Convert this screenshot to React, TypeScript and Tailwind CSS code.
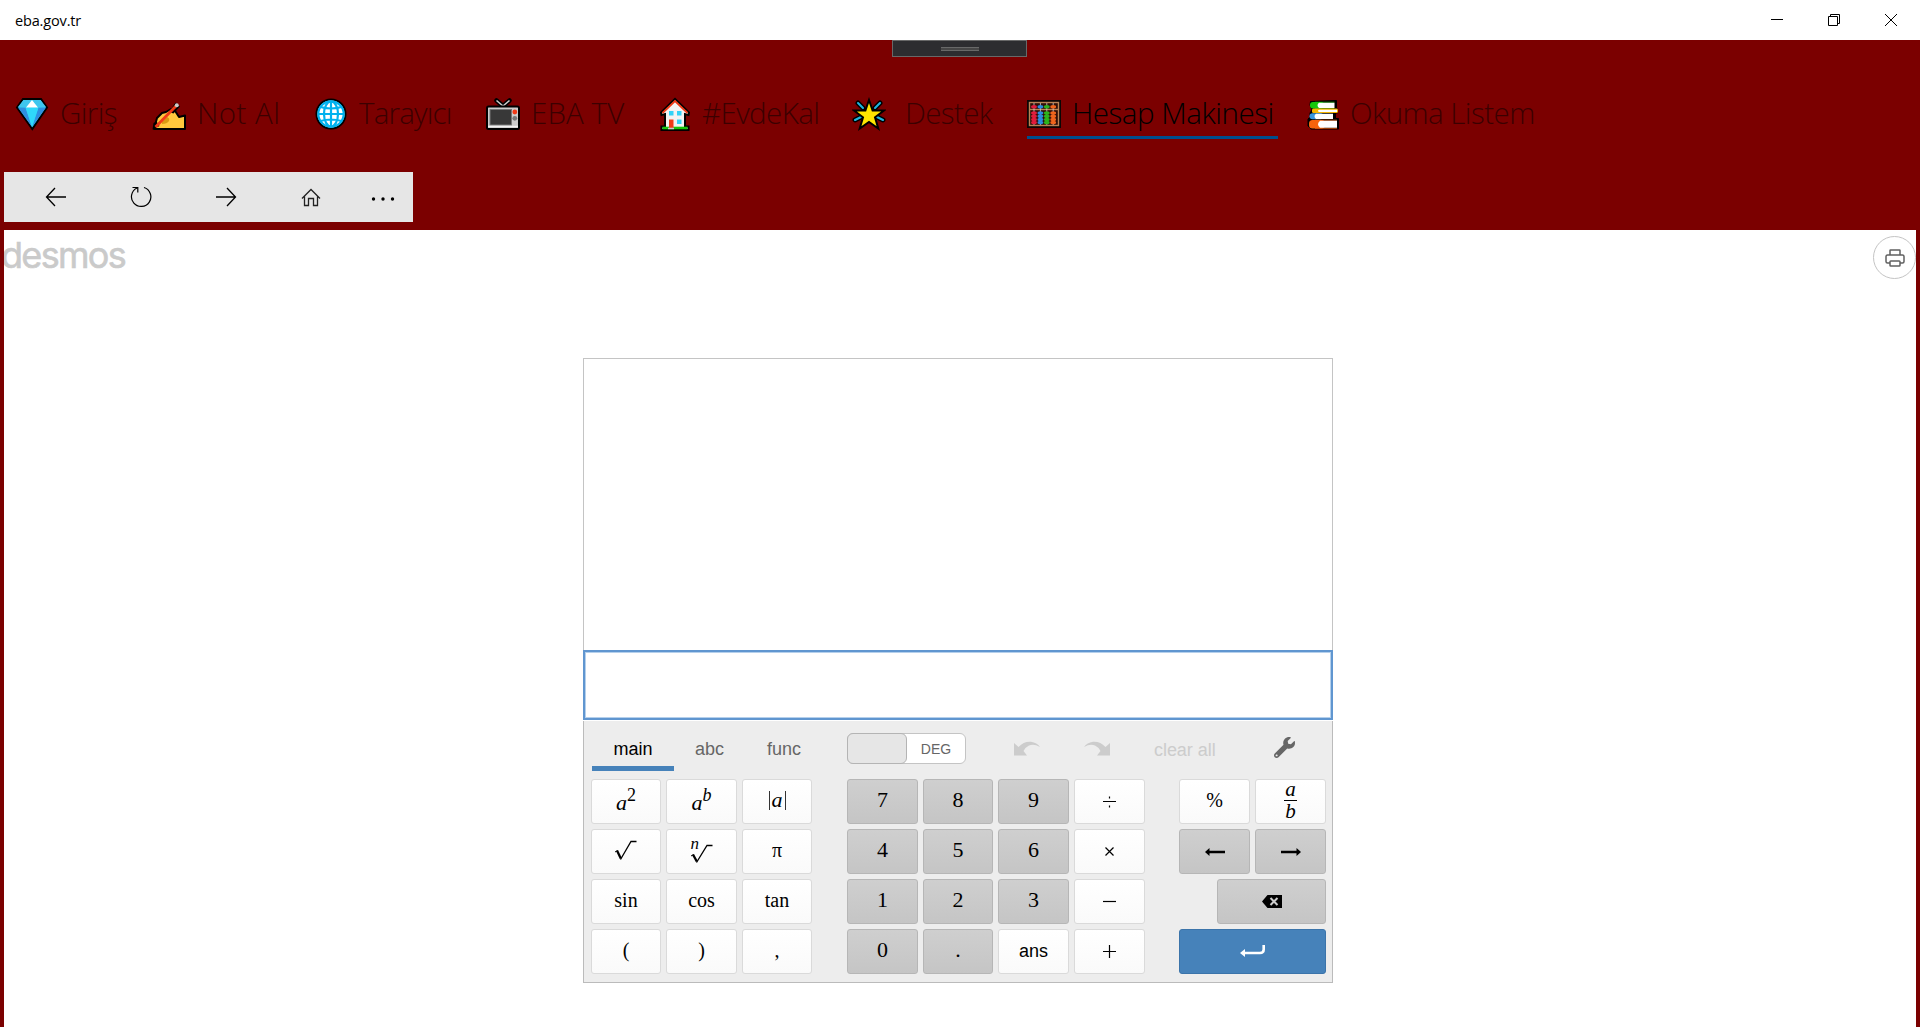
import type { ReactNode } from "react";

const Gem = () => (
  <svg width="34" height="34" viewBox="0 0 34 34">
    <path d="M8 2h18l6 8.5L17.300 32 2 10.500z" fill="#2bc8ee" stroke="#000" strokeWidth="2" />
    <path d="M3 10.500h7.500L17 30z" fill="#2f8fe0" />
    <path d="M31 10.500h-7.500L17 30z" fill="#2f8fe0" />
    <path d="M3 10l5.500-7H17l-6.500 7.500z" fill="#3fc6ee" />
    <path d="M31 10l-5.500-7H17l6.500 7.500z" fill="#3fc6ee" />
    <path d="M10.500 10.500h13L17 30z" fill="#2fd8fa" />
    <path d="M17 3l6 7.500H11z" fill="#fff" />
  </svg>
);
const Writing = () => (
  <svg width="36" height="34" viewBox="0 0 36 34">
    <path d="M3 32l3-11 5-5 4-1 5-3 3.500 1 4.500 7 6-1.500V32z" fill="#ffc83d" stroke="#000" strokeWidth="2" strokeLinejoin="round" />
    <path d="M11 25l5-5q3 1 2 4-2 3-7 3z" fill="#d99a12" />
    <path d="M18 15l6.500-9.500 4.500 4-6.500 7z" fill="#000" />
    <path d="M1.500 32.500l1-6.500 3-1.500 3 4.500z" fill="#000" />
    <path d="M4.500 30L25.500 8.500" stroke="#f03a17" strokeWidth="2.800" />
    <circle cx="25.800" cy="8.300" r="2" fill="#ccc" />
  </svg>
);
const Globe = () => (
  <svg width="34" height="34" viewBox="0 0 34 34" fill="none">
    <circle cx="17" cy="17" r="14.500" fill="#fff" stroke="#000" strokeWidth="2" />
    <g stroke="#00b1ee" strokeWidth="2.200">
      <circle cx="17" cy="17" r="12.700" />
      <ellipse cx="17" cy="17" rx="7" ry="12.500" />
      <path d="M17 4v26M4 17h26M6.500 10q10.500 3 21 0M6.500 24q10.500-3 21 0" />
    </g>
  </svg>
);
const Tv = () => (
  <svg width="36" height="34" viewBox="0 0 36 34">
    <path d="M11.500 3.500L18 9l6.500-5.500" stroke="#000" strokeWidth="4.500" fill="none" strokeLinecap="round" />
    <path d="M11.500 3.500L18 9l6.500-5.500" stroke="#ccc" strokeWidth="1.600" fill="none" />
    <rect x="2" y="9.500" width="32" height="22.500" rx="1.500" fill="#ccc" stroke="#000" strokeWidth="2" />
    <rect x="5" y="12.500" width="21.500" height="15.500" fill="#383838" stroke="#767676" />
    <circle cx="29.800" cy="15" r="2.400" fill="#f03a17" />
    <circle cx="29.800" cy="21.300" r="2.400" fill="#767676" />
    <path d="M3 29.500h30" stroke="#f2f2f2" strokeWidth="1.500" />
  </svg>
);
const House = () => (
  <svg width="32" height="34" viewBox="0 0 32 34">
    <path d="M2.500 33v-3.500H6V17l-3.500 1-.500-2.500L16 2l14 13.500-.500 2.500L26 17v12.500h3.500V33z" fill="#f2f2f2" stroke="#000" strokeWidth="2" />
    <path d="M3.500 16L16 4l12.500 12" fill="none" stroke="#f03a17" strokeWidth="1.800" />
    <path d="M3.500 31h25" stroke="#16c60c" strokeWidth="2.600" />
    <path d="M10 22.500h4.500V32H10z" fill="#f03a17" />
    <path d="M10 14h4.500v4.500H10zM18 14h4.500v4.500H18zM18 22.500h4.500V27H18z" fill="#31d2f7" />
    <path d="M9 31.500h6" stroke="#ccc" strokeWidth="1.500" />
  </svg>
);
const Star = () => (
  <svg width="34" height="34" viewBox="0 0 34 34">
    <g strokeLinecap="round">
      <path d="M6 6l5 5M28 6l-5 5M3 23l6-3M31 23l-6-3" stroke="#000" strokeWidth="5" />
      <path d="M6 6l5 5M28 6l-5 5M3 23l6-3M31 23l-6-3" stroke="#1fb6e0" strokeWidth="2" />
    </g>
    <path d="M17 3l3.600 10.500H32l-9 6.800L26.300 31.500 17 25l-9.300 6.500L11 20.300l-9-6.800h11.400z" fill="#ffe500" stroke="#000" strokeWidth="2" />
  </svg>
);
const abacusRods = [
  ["#e11c3c", 7],
  ["#2a8be0", 13.4],
  ["#2cb41c", 19.8],
  ["#f0641c", 26.2],
] as const;
const Abacus = () => (
  <svg width="34" height="28" viewBox="0 0 34 28">
    <rect width="34" height="28" fill="#0c0605" />
    <rect x="2.500" y="2.500" width="29" height="23" fill="#2e0f08" stroke="#b98255" strokeWidth="1.400" />
    <path d="M3 9.500h28" stroke="#b98255" strokeWidth="1.400" />
    {abacusRods.map(([c, x]) => (
      <g key={x}>
        <path d={`M${x} 3v22`} stroke="#ccc" strokeWidth="0.800" />
        {[6.7, 13, 16.2, 19.4, 22.6].map((y) => (
          <ellipse key={y} cx={x} cy={y} rx="2.900" ry="1.750" fill={c} />
        ))}
      </g>
    ))}
  </svg>
);
const Books = () => (
  <svg width="32" height="30" viewBox="0 0 32 30" className="mt-[2px]">
    <path d="M3.500 1.500L29.500 0.500V9h1v4h-2v5.500h3V29H4L1 26v-7l2-2v-4l2-3-2-5z" fill="#000" stroke="#000" strokeLinejoin="round" />
    <rect x="3" y="2" width="14" height="6.500" rx="3" fill="#16c60c" />
    <path d="M8 2.200h19.500M8 8.300H27" stroke="#16c60c" strokeWidth="0.700" />
    <path d="M12 2.800h15.500v5.200H12q-3-2.600 0-5.200z" fill="#fff" />
    <rect x="5" y="8.500" width="26" height="4.500" rx="1.500" fill="#f7b500" />
    <path d="M12 9.700h18V12H12q-2-1.200 0-2.300z" fill="#fff" />
    <rect x="2.500" y="13.300" width="14" height="6" rx="3" fill="#3a96dd" />
    <path d="M9 13.700h17v5.200H9q-3-2.600 0-5.200z" fill="#fff" />
    <rect x="2" y="20" width="16" height="8.500" rx="3.500" fill="#f7630c" />
    <path d="M8 20.200h22M8 28.300h22" stroke="#f7630c" strokeWidth="0.800" />
    <path d="M13 20.700h17v7.100H13q-4-3.500 0-7.100z" fill="#fff" />
  </svg>
);

type NavItem = { label: string; icon: ReactNode; box: string; text: string; active?: boolean };
const nav: NavItem[] = [
  { label: "Giriş", icon: <Gem />, box: "w-[136px]", text: "ml-[11px] tracking-[-0.600px]" },
  { label: "Not Al", icon: <Writing />, box: "w-[163px]", text: "ml-[10px] tracking-[0.500px]" },
  { label: "Tarayıcı", icon: <Globe />, box: "w-[171px]", text: "ml-[11px] tracking-[-0.800px]" },
  { label: "EBA TV", icon: <Tv />, box: "w-[174px]", text: "ml-[10px] tracking-[0.100px]" },
  { label: "#EvdeKal", icon: <House />, box: "w-[193px]", text: "ml-[11px] tracking-[-0.600px]" },
  { label: "Destek", icon: <Star />, box: "w-[175px]", text: "ml-[19px] tracking-[-0.600px]" },
  { label: "Hesap Makinesi", icon: <Abacus />, box: "w-[251px] mr-[29px]", text: "ml-[11px] tracking-[-0.450px]", active: true },
  { label: "Okuma Listem", icon: <Books />, box: "w-[240px]", text: "ml-[11px] tracking-[-0.550px]" },
];

const white = "border-[#dadada] bg-linear-to-b from-white to-[#fafafa]";
const gray = "border-[#b6b6b6] bg-linear-to-b from-[#cfcfcf] to-[#c5c5c5]";

function Key({ children, className = white }: { children: ReactNode; className?: string }) {
  return (
    <button className={`flex h-[45px] items-center justify-center rounded-[3px] border font-['Liberation_Serif',serif] text-[20px] leading-none text-black ${className}`}>
      {children}
    </button>
  );
}
const Digit = ({ children }: { children: ReactNode }) => (
  <Key className={gray}>
    <span className="-mt-[4px] text-[22px]">{children}</span>
  </Key>
);
const Op = ({ d }: { d: string }) => (
  <Key>
    <svg width="15" height="15" viewBox="0 0 15 15" fill="none" stroke="#000" strokeWidth="1.200">
      <path d={d} />
    </svg>
  </Key>
);

const LongArrow = ({ flip }: { flip?: boolean }) => (
  <svg width="20" height="8" viewBox="0 0 20 8" className={flip ? "-scale-x-100" : ""}>
    <path d="M0 4l4.500-4v2.800H20v2.400H4.500V8z" />
  </svg>
);

export default function App() {
  return (
    <div className="flex h-[1027px] w-[1920px] flex-col overflow-hidden bg-[#7b0000]">
      <header className="flex h-10 shrink-0 items-center justify-between bg-white pl-[15px]">
        <span className="mt-px font-['Open_Sans',sans-serif] text-[14.500px] tracking-[-0.150px] text-black">eba.gov.tr</span>
        <svg width="171" height="40" viewBox="0 0 171 40" fill="none" stroke="#000" strokeWidth="1">
          <path d="M22 19.500h12M79.500 16.500h9v9h-9zM81.500 16v-1.500h9v9H89M136 14l12 12M148 14l-12 12" />
        </svg>
      </header>

      <div className="flex h-[17px] shrink-0 pl-[892px]">
        <div className="flex h-[17px] w-[135px] items-center justify-center border border-[#686868] bg-[#2d2d30]">
          <div className="h-1 w-[38px] border-y border-[#686868] bg-[#464646]" />
        </div>
      </div>

      <nav className="flex h-[115px] shrink-0 items-start pl-[15px] pt-[34px]">
        {nav.map((n) => (
          <div
            key={n.label}
            className={`flex h-[48px] shrink-0 items-center whitespace-nowrap border-b-[3px] font-['Open_Sans',sans-serif] text-[29.500px] font-light leading-none ${n.box} ${n.active ? "border-[#004e8c] text-black" : "border-transparent text-[#3b0000]"}`}
          >
            <span className="shrink-0">{n.icon}</span>
            <span className={`-mt-[2px] ${n.text}`}>{n.label}</span>
          </div>
        ))}
      </nav>

      <div className="ml-1 flex h-[50px] w-[409px] shrink-0 items-center bg-[#e6e6e6] text-black">
        <div className="flex w-[85px] justify-center pl-[18px]">
          <svg width="22" height="20" viewBox="0 0 22 20" fill="none" stroke="#000" strokeWidth="1.300">
            <path d="M21 10H1.500M10 1L1.500 10l8.500 9" />
          </svg>
        </div>
        <div className="flex w-[85px] justify-center pl-[18px]">
          <svg width="22" height="22" viewBox="0 0 22 22" fill="none" stroke="#000" strokeWidth="1.200">
            <path d="M14 1.500a9.700 9.700 0 1 1-7 .5M2.500 1.500h5.300v5" />
          </svg>
        </div>
        <div className="flex w-[85px] justify-center pl-[18px]">
          <svg width="22" height="20" viewBox="0 0 22 20" fill="none" stroke="#000" strokeWidth="1.300">
            <path d="M1 10h19.500M12 1l8.500 9-8.500 9" />
          </svg>
        </div>
        <div className="flex w-[85px] justify-center pl-[18px]">
          <svg width="20" height="19" viewBox="0 0 20 19" fill="none" stroke="#222" strokeWidth="1.300">
            <path d="M1 10.500L10 1.500l9 9M3.500 8.500v9h4v-7h5v7h4v-9" />
          </svg>
        </div>
        <div className="flex w-[69px] justify-center pl-[8px] pt-[3px]">
          <svg width="24" height="4" viewBox="0 0 24 4">
            <circle cx="2.500" cy="2" r="1.700" />
            <circle cx="12" cy="2" r="1.700" />
            <circle cx="21.500" cy="2" r="1.700" />
          </svg>
        </div>
      </div>

      <main className="mx-1 mt-2 flex flex-1 flex-col overflow-hidden bg-white">
        <div className="flex h-[128px] shrink-0 items-start justify-between">
          <span className="-ml-[3px] mt-[3px] font-['Inter',sans-serif] text-[36px] leading-[44px] tracking-[-1.700px] text-[#cacaca] [-webkit-text-stroke:0.600px_#cacaca]">desmos</span>
          <div className="mt-[6px] flex size-[43px] items-center justify-center rounded-full border border-[#c4c4c4]">
            <svg width="20" height="18" viewBox="0 0 20 18" fill="none" stroke="#606060" strokeWidth="1.500">
              <path d="M5 6V1.500Q5 1 5.500 1h9q.5 0 .5.500V6M5 14H2.500Q1 14 1 12.500v-5Q1 6 2.500 6h15Q19 6 19 7.500v5q0 1.500-1.500 1.500H15" />
              <rect x="5" y="12" width="10" height="5" rx="0.800" />
            </svg>
          </div>
        </div>

        <section className="ml-[579px] flex h-[625px] w-[750px] shrink-0 flex-col">
          <div className="h-[292px] border border-b-0 border-[#c4c4c4]" />
          <div className="h-[70px] border-2 border-[#6096d0]">
            <div className="h-full border border-[#b5d0ec]" />
          </div>
          <div className="mt-px flex flex-1 flex-col border-x border-b border-[#bbb] bg-[#ededed] pl-[7px] font-['Liberation_Sans',Arial,sans-serif] text-[18px]">
            <div className="flex h-[58px] shrink-0 items-start">
              <div className="ml-px flex h-[50px] w-[82px] items-center justify-center border-b-[5px] border-[#4682ba] pt-[11px] text-black">main</div>
              <div className="flex h-[50px] w-[71px] items-center justify-center pt-[6px] text-[#666]">abc</div>
              <div className="flex h-[50px] w-[78px] items-center justify-center pt-[6px] text-[#666]">func</div>
              <div className="ml-[24px] mt-[12px] flex h-[31px] w-[119px] rounded-[6px] border border-[#c4c4c4] bg-white">
                <div className="-ml-px -mt-px h-[31px] w-[60px] rounded-[6px] border border-[#b4b4b4] bg-[#e6e6e6]" />
                <span className="flex flex-1 items-center justify-center pt-px text-[14px] text-[#666]">DEG</span>
              </div>
              <svg width="26" height="15" viewBox="0 0 26 15" className="ml-[48px] mt-[20px]" fill="#ccc">
                <path d="M0 2l4.500 4Q10 0 17 .7q6 .8 9 5.300-6-3.500-11-1.500-4 2-5.500 5.500L13 14.500H0z" />
              </svg>
              <svg width="26" height="15" viewBox="0 0 26 15" className="ml-[44px] mt-[20px] -scale-x-100" fill="#ccc">
                <path d="M0 2l4.500 4Q10 0 17 .7q6 .8 9 5.300-6-3.500-11-1.500-4 2-5.500 5.500L13 14.500H0z" />
              </svg>
              <span className="ml-[44px] mt-[16px] leading-[27px] tracking-[-0.050px] text-[#ccc]">clear all</span>
              <svg width="21" height="21" viewBox="0 0 512 512" className="ml-[58px] mt-[16px]" fill="#666">
                <path d="M507.700 109.100c-2.200-9-13.500-12.100-20.100-5.500l-74.400 74.400-67.900-11.300L334 98.900l74.400-74.400c6.600-6.600 3.400-17.900-5.700-20.200-47.400-11.700-99.600.9-136.600 37.900-39.600 39.600-50.500 97.100-34.100 147.200L18.700 402.800c-25 25-25 65.500 0 90.500s65.500 25 90.500 0l213.200-213.200c50.100 16.700 107.500 5.700 147.400-34.200 37.100-37.100 49.700-89.300 37.900-136.800zM64 472c-13.200 0-24-10.800-24-24s10.700-24 24-24 24 10.700 24 24-10.700 24-24 24z" />
              </svg>
            </div>

            <div className="grid grid-cols-[70px_71px_70px_25px_71px_70px_71px_71px_24px_71px_71px] gap-[5px]">
              <Key><span className="-mt-px flex items-start text-[22px] italic"><span className="mt-[3px]">a</span><span className="-mt-[3px] text-[18px] not-italic">2</span></span></Key>
              <Key><span className="-mt-px flex items-start text-[22px] italic"><span className="mt-[3px]">a</span><span className="-mt-[3px] text-[18px]">b</span></span></Key>
              <Key>
                <span className="-mt-[2px] flex h-[19px] items-center border-x border-[#333] px-[2px] text-[22px] italic">
                  <span className="-mt-px">a</span>
                </span>
              </Key>
              <span />
              <Digit>7</Digit>
              <Digit>8</Digit>
              <Digit>9</Digit>
              <Op d="M1 7.500h13M7.500 2.500v2M7.500 11.500v2" />
              <span />
              <Key><span className="-mt-[3px]">%</span></Key>
              <Key>
                <span className="-mt-px flex flex-col items-center text-[21px] italic leading-[17px]">
                  <span className="h-[18px] w-[13px] border-b border-black text-center leading-[13px]">a</span>
                  <span className="h-[18px] leading-[20px]">b</span>
                </span>
              </Key>

              <Key>
                <svg width="23" height="20" viewBox="0 0 23 20" fill="none" stroke="#000" className="-ml-px -mt-[3px]">
                  <path d="M1 12l2.500-1.500" />
                  <path d="M3 10.500l3.800 8" strokeWidth="2.300" />
                  <path d="M6.500 19.500L17 1.500h5.500" strokeWidth="1.300" />
                </svg>
              </Key>
              <Key>
                <svg width="23" height="25" viewBox="0 0 23 25" fill="none" stroke="#000" className="overflow-visible">
                  <text x="0.500" y="10" fontSize="17" fontStyle="italic" fontFamily="Liberation Serif, serif" fill="#000" stroke="none">n</text>
                  <path d="M1 17l2.500-1.500" />
                  <path d="M3 15.500l3.800 7" strokeWidth="2.300" />
                  <path d="M6.500 23.500L17 6.500h5.500" strokeWidth="1.300" />
                </svg>
              </Key>
              <Key><span className="-mt-[3px]">π</span></Key>
              <span />
              <Digit>4</Digit>
              <Digit>5</Digit>
              <Digit>6</Digit>
              <Op d="M3.500 3.500l8 8M11.500 3.500l-8 8" />
              <span />
              <Key className={gray}><LongArrow /></Key>
              <Key className={gray}><LongArrow flip /></Key>

              <Key><span className="-mt-[4px]">sin</span></Key>
              <Key><span className="-mt-[4px]">cos</span></Key>
              <Key><span className="-mt-[4px]">tan</span></Key>
              <span />
              <Digit>1</Digit>
              <Digit>2</Digit>
              <Digit>3</Digit>
              <Op d="M1 7.500h13" />
              <span />
              <div className="col-span-2 flex justify-end">
                <Key className={`w-[109px] ${gray}`}>
                  <svg width="20" height="13" viewBox="0 0 20 13">
                    <path d="M0 6.500L5.500 0H20v13H5.500z" />
                    <path d="M8.500 3l7 7M15.500 3l-7 7" stroke="#ccc" strokeWidth="2" />
                  </svg>
                </Key>
              </div>

              <Key><span className="-mt-[4px]">(</span></Key>
              <Key><span className="-mt-[4px]">)</span></Key>
              <Key><span className="-mt-[3px]">,</span></Key>
              <span />
              <Digit>0</Digit>
              <Digit>.</Digit>
              <Key><span className="-mt-[2px] font-['Liberation_Sans',Arial,sans-serif] text-[18px]">ans</span></Key>
              <Op d="M1 7.500h13M7.500 1v13" />
              <span />
              <Key className="col-span-2 border-[#3b74aa] bg-[#4682ba]">
                <svg width="26" height="13" viewBox="0 0 26 13" className="-mt-px" fill="none">
                  <path d="M23.700 0v4.500Q23.700 8 20 8H4" stroke="#fff" strokeWidth="2.600" />
                  <path d="M0 8l5-4v8z" fill="#fff" />
                </svg>
              </Key>
            </div>
          </div>
        </section>
      </main>
    </div>
  );
}
